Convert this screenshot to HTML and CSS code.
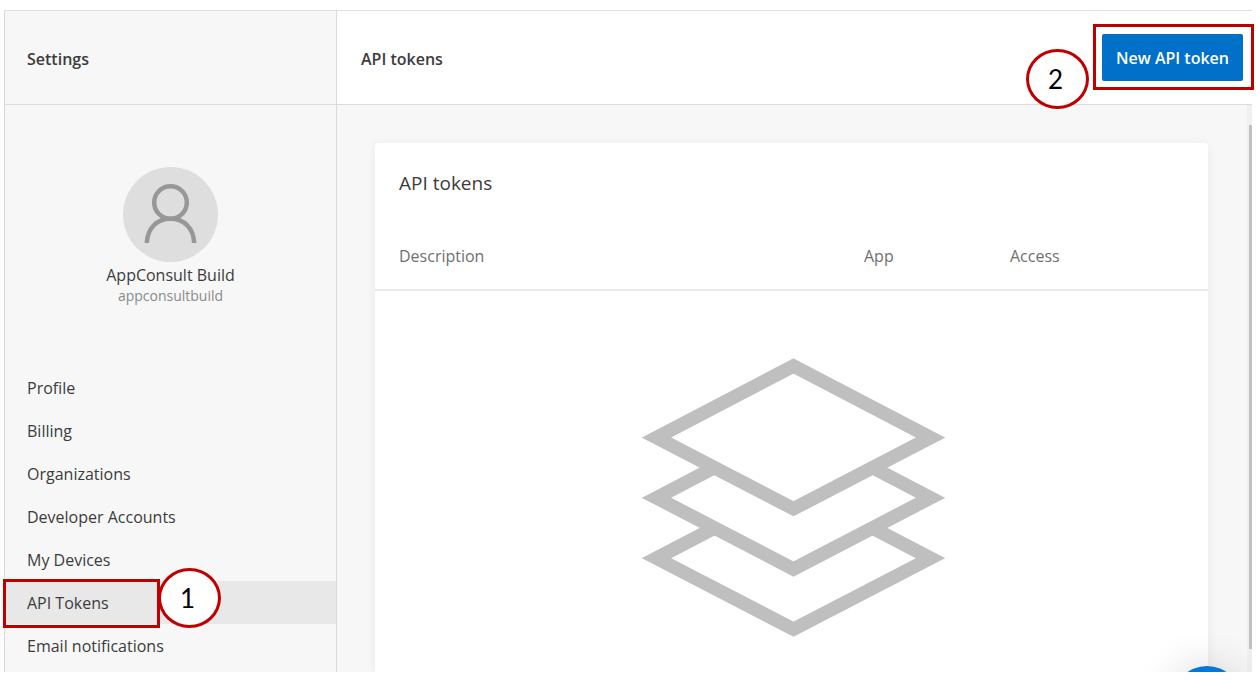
FILE: index.html
```html
<!DOCTYPE html>
<html lang="en">
<head>
<meta charset="utf-8">
<title>API tokens</title>
<link rel="stylesheet" href="styles.css">
</head>
<body>
<div class="app">
  <aside class="sidebar">
    <div class="sidebar-header"><h2 class="bar-title">Settings</h2></div>
    <div class="profile">
      <svg class="avatar" viewBox="0 0 95 95" aria-hidden="true">
        <circle cx="47.5" cy="47.5" r="47.5" fill="#dedede"/>
        <g fill="none" stroke="#979797" stroke-width="4.5">
          <circle cx="47.5" cy="35.5" r="16.3"/>
          <path d="M23.8 76C24.5 61 34 51.8 47.5 51.8S70.5 61 71.2 76"/>
        </g>
      </svg>
      <p class="profile-name">AppConsult Build</p>
      <p class="profile-handle">appconsultbuild</p>
    </div>
    <nav class="nav" aria-label="Settings">
      <a class="nav-item" href="#profile">Profile</a>
      <a class="nav-item" href="#billing">Billing</a>
      <a class="nav-item" href="#organizations">Organizations</a>
      <a class="nav-item" href="#accounts">Developer Accounts</a>
      <a class="nav-item" href="#devices">My Devices</a>
      <div class="nav-current">
        <a class="nav-item active" href="#tokens" aria-current="page">API Tokens</a>
        <span class="highlight highlight-nav"></span>
        <span class="step step-one">1</span>
      </div>
      <a class="nav-item" href="#email">Email notifications</a>
    </nav>
  </aside>
  <main class="main">
    <header class="main-header">
      <h1 class="bar-title">API tokens</h1>
      <div class="action">
        <button class="primary" type="button">New API token</button>
        <span class="highlight highlight-action"></span>
        <span class="step step-two">2</span>
      </div>
    </header>
    <div class="pane">
      <section class="card">
        <h2 class="card-title">API tokens</h2>
        <table class="tokens">
          <thead>
            <tr><th class="col-description">Description</th><th class="col-app">App</th><th>Access</th></tr>
          </thead>
        </table>
        <div class="empty">
          <svg class="layers" viewBox="0 0 303 279" aria-hidden="true">
            <g fill="#fff" stroke="#bfbfbf" stroke-width="13.6">
              <path d="M151.5 128.7L288.5 200.2L151.5 271.2L14.5 200.2Z"/>
              <path d="M151.5 68.3L288.5 139.8L151.5 211L14.5 139.8Z"/>
              <path d="M151.5 8L288.5 79.5L151.5 150.7L14.5 79.5Z"/>
            </g>
          </svg>
        </div>
      </section>
      <div class="scrollbar"><div class="thumb"></div></div>
      <button class="bubble" type="button" aria-label="Chat"></button>
    </div>
  </main>
</div>
</body>
</html>
```
FILE: styles.css
```css
* { box-sizing: border-box; }

body {
  margin: 0;
  padding: 10px 4px 23px;
  background: #fff;
  color: #3c3c3c;
  font: 16px/20px "Open Sans", "Noto Sans", sans-serif;
}

h1, h2, p { margin: 0; }

.app {
  display: flex;
  height: calc(100vh - 33px);
  border-top: 1px solid #e0e0e0;
}

.sidebar {
  flex: 0 0 333px;
  background: #f7f7f7;
  border: solid #d9d9d9;
  border-width: 0 1px;
}

.sidebar-header, .main-header {
  display: flex;
  align-items: center;
  height: 94px;
  padding-left: 22px;
  border-bottom: 1px solid #dcdcdc;
}

.bar-title {
  padding-top: 2px;
  font-size: 16px;
  font-weight: 600;
}

.profile {
  display: flex;
  flex-direction: column;
  align-items: center;
  height: 261px;
  padding-top: 62px;
}

.avatar { width: 95px; height: 95px; }
.profile-name { margin-top: 3px; }
.profile-handle { font-size: 14px; line-height: 22px; color: #8a8a8a; }

.nav-item {
  display: block;
  padding: 12px 22px 11px;
  color: inherit;
  text-decoration: none;
}

.nav-item.active { background: #e8e8e8; }
.nav-current, .action { position: relative; }

.main {
  flex: 1;
  min-width: 0;
  display: flex;
  flex-direction: column;
}

.main-header {
  position: relative;
  z-index: 1;
  justify-content: space-between;
  padding: 0 9px 0 24px;
}

.primary {
  display: block;
  height: 47px;
  padding: 1px 14px 0;
  border: 0;
  border-radius: 2px;
  background: #0070c9;
  color: #fff;
  font: inherit;
  font-weight: 600;
}

.highlight {
  position: absolute;
  border: 3px solid #c00000;
  pointer-events: none;
}

.highlight-nav { left: -2px; top: -2px; width: 157px; height: 49px; }
.highlight-action { inset: -10px -11px -9px -9px; }

.step {
  position: absolute;
  display: flex;
  align-items: center;
  justify-content: center;
  width: 63px;
  height: 60px;
  border: 3px solid #c00000;
  border-radius: 50%;
  background: #fff;
  color: #000;
  font: 26px/32px Lato, sans-serif;
}

.step-one { left: 153px; top: -13px; padding-right: 4px; }
.step-two { right: calc(100% + 13px); top: 15px; padding-right: 4px; }

.pane {
  position: relative;
  flex: 1;
  min-height: 0;
  overflow: hidden;
  display: flex;
  padding-left: 38px;
  background: #f7f7f7;
}

.card {
  flex: 1;
  margin-top: 38px;
  margin-right: 39px;
  border-radius: 4px 4px 0 0;
  background: #fff;
  box-shadow: 0 2px 12px rgba(0, 0, 0, 0.06);
}

.card-title {
  padding: 28px 24px 0;
  font-size: 19px;
  line-height: 24px;
  font-weight: 400;
}

.tokens {
  width: 100%;
  margin-top: 27px;
  border-collapse: collapse;
  table-layout: fixed;
}

.tokens th {
  height: 68px;
  padding: 0;
  border-bottom: 2px solid #e8e8e8;
  color: #707070;
  font-weight: 500;
  text-align: left;
}

.tokens .col-description { width: 489px; padding-left: 24px; }
.tokens .col-app { width: 146px; }

.empty {
  display: flex;
  justify-content: center;
  padding: 67px 0 0 4px;
}

.layers { width: 303px; height: 279px; }

.scrollbar {
  flex: 0 0 5px;
  padding: 20px 0 23px 2px;
  background: #f0f0f0;
}

.thumb { height: 100%; background: #c1c1c1; }

.bubble {
  position: absolute;
  right: 11px;
  bottom: -62px;
  width: 68px;
  height: 68px;
  border: 0;
  border-radius: 50%;
  background: #0078d7;
  box-shadow: 0 0 40px rgba(0, 0, 0, 0.16);
}
```
